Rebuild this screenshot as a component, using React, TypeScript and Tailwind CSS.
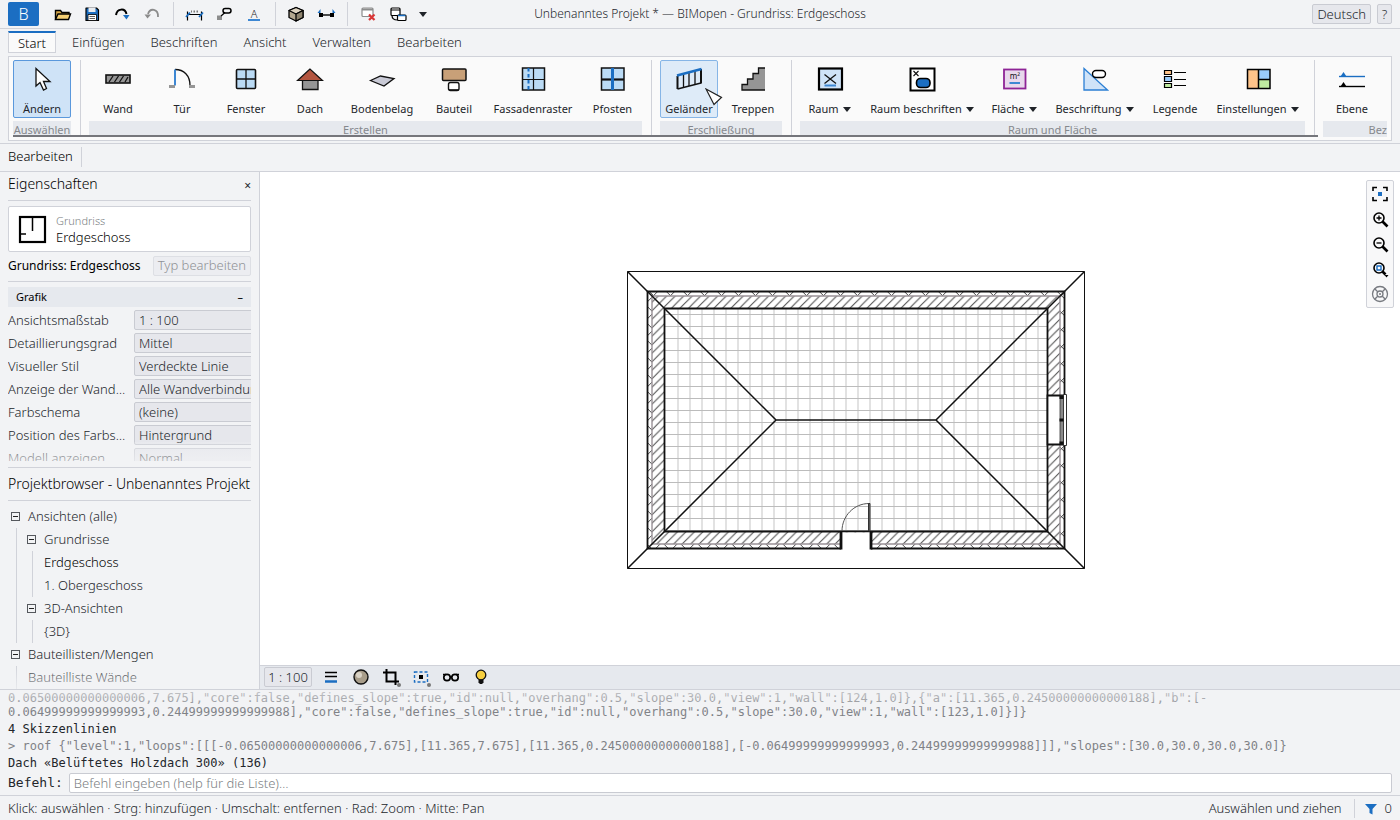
import type { ReactNode } from "react";

const Svg = ({ size, children }: { size: number; children: ReactNode }) => (
  <svg width={size} height={size} viewBox={`0 0 ${size} ${size}`} fill="none" aria-hidden="true" className="shrink-0">
    {children}
  </svg>
);

const Caret = () => (
  <svg width="8" height="5" viewBox="0 0 8 5" aria-hidden="true" className="shrink-0">
    <path d="M0 0h8L4 5z" fill="#1f2328" />
  </svg>
);

/* ---------- quick access bar ---------- */

const quickGroups: { name: string; icon: ReactNode }[][] = [
  [
    {
      name: "Öffnen",
      icon: (
        <>
          <path d="M5.5 17.5V8.5h5l1.5 2h7v2" fill="#d9a94a" stroke="#000" strokeWidth="1.4" />
          <path d="M5.5 17.5l2.5-5.5h12.5l-2 5.5z" fill="#f5cf74" stroke="#000" strokeWidth="1.4" />
        </>
      ),
    },
    {
      name: "Speichern",
      icon: (
        <>
          <path d="M6 6h10.5l2 2v10.5H6z" fill="#1b6ec2" stroke="#000" strokeWidth="1.2" strokeLinejoin="round" />
          <path d="M8.5 5.5h7v4.5h-7z" fill="#e8ebef" />
          <path d="M8 12.5h8.5v6H8z" fill="#fff" stroke="#000" strokeWidth="0.8" />
          <path d="M9.5 14.5h5.5M9.5 16.5h5.5" stroke="#333" strokeWidth="0.8" />
        </>
      ),
    },
    {
      name: "Wiederholen",
      icon: (
        <>
          <path d="M6 13c1-6.5 9-7.5 10.5-1" stroke="#000" strokeWidth="2" />
          <path d="M13 13h6.5l-3 4.5z" fill="#1b6ec2" />
        </>
      ),
    },
    {
      name: "Rückgängig",
      icon: (
        <>
          <path d="M18 15c.5-8.5-8-9.5-10-3" stroke="#8c8c8c" strokeWidth="1.8" />
          <path d="M4.5 12.5h6.5l-3.5 4z" fill="#8c8c8c" />
        </>
      ),
    },
  ],
  [
    {
      name: "Bemaßung",
      icon: (
        <>
          <path d="M5.5 9.5v9M19.5 9.5v9M5 12.5h15" stroke="#000" strokeWidth="1.2" />
          <path d="M4 15l4-4.5M17 15l4-4.5" stroke="#1b6ec2" strokeWidth="1.8" />
          <path d="M9 9.5h1M11.5 9.5h1.5M14.5 9.5h1.5" stroke="#777" strokeWidth="2" />
        </>
      ),
    },
    {
      name: "Kennzeichen",
      icon: (
        <>
          <path d="M5 13.5h5v4.5H5z" fill="#8c8c8c" />
          <path d="M9 14l4-3.5" stroke="#000" strokeWidth="1.2" />
          <rect x="11" y="6.5" width="8" height="4.5" rx="2.2" stroke="#000" strokeWidth="1.5" />
        </>
      ),
    },
    {
      name: "Text",
      icon: (
        <>
          <text x="12" y="16" textAnchor="middle" fontSize="11" fill="#222" fontFamily="Noto Sans, sans-serif">
            A
          </text>
          <path d="M6 18h12" stroke="#3d87d3" strokeWidth="2" />
        </>
      ),
    },
  ],
  [
    {
      name: "3D-Ansicht",
      icon: (
        <g stroke="#000" strokeWidth="1.3" strokeLinejoin="round">
          <path d="M12 5.5l7 3v7l-7 3.5-7-3.5v-7z" fill="#b3a78f" />
          <path d="M12 5.5l7 3-7 3.5-7-3.5z" fill="#ddd3c0" />
          <path d="M12 12v7l7-3.5v-7z" fill="#8e846f" />
        </g>
      ),
    },
    {
      name: "Schnitt",
      icon: (
        <>
          <path d="M5 11h4v4H5zM16 11h4v4h-4z" fill="#000" />
          <path d="M7 13h11" stroke="#000" strokeWidth="1.4" />
          <path d="M3.5 11l3-4v4zM21.5 11l-3-4v4z" fill="#1b6ec2" />
        </>
      ),
    },
  ],
  [
    {
      name: "Fenster schließen",
      icon: (
        <>
          <rect x="6" y="6" width="11" height="8.5" rx="1" fill="#fff" stroke="#8c8c8c" strokeWidth="1.2" />
          <path d="M6 7.5h11" stroke="#8c8c8c" strokeWidth="2" />
          <path d="M13 12.5l5.5 5.5M18.5 12.5L13 18" stroke="#d93636" strokeWidth="2.2" />
        </>
      ),
    },
    {
      name: "Fenster wechseln",
      icon: (
        <>
          <rect x="5" y="6" width="9" height="7.5" rx="1" fill="#fff" stroke="#000" strokeWidth="1.2" />
          <path d="M5 8h9" stroke="#000" />
          <path d="M6 13.5c0 3 2 4.5 5.5 4.5" stroke="#000" strokeWidth="1.2" />
          <rect x="11.5" y="13" width="8.5" height="5.5" rx="1" fill="#fff" stroke="#000" strokeWidth="1.2" />
          <path d="M12 13.5h7.5" stroke="#1b6ec2" strokeWidth="1.5" />
        </>
      ),
    },
  ],
];

/* ---------- ribbon ---------- */

type Tool = { label: string; width: string; icon: ReactNode; menu?: boolean; state?: "active" | "hover" };
type Group = { label: string; tools: Tool[]; cut?: boolean };

const groups: Group[] = [
  {
    label: "Auswählen",
    tools: [
      {
        label: "Ändern",
        width: "w-[58px]",
        state: "active",
        icon: <path d="M8 3.5V21l4-3.5 3.5 7.5 3-1.5-3-7H22z" fill="#fff" stroke="#111" strokeWidth="1.3" />,
      },
    ],
  },
  {
    label: "Erstellen",
    tools: [
      {
        label: "Wand",
        width: "w-[58px]",
        icon: (
          <>
            <rect x="2" y="10" width="24" height="8" fill="#959595" stroke="#111" strokeWidth="1.6" />
            <path d="M5 17l4-6M10.5 17l4-6M15.5 17l4-6M21 17l3-5" stroke="#111" strokeWidth="1.3" />
          </>
        ),
      },
      {
        label: "Tür",
        width: "w-[58px]",
        icon: (
          <>
            <path d="M7 4.5c9 0 15 6 15 16" stroke="#111" strokeWidth="1.3" />
            <path d="M7 4.5v16" stroke="#3d87d3" strokeWidth="2" />
            <path d="M1 20h6v3H1zM21 20h6v3h-6z" fill="#959595" />
          </>
        ),
      },
      {
        label: "Fenster",
        width: "w-[58px]",
        icon: (
          <>
            <rect x="4.5" y="4.5" width="19" height="19" rx="1" fill="#bbdbf5" stroke="#111" strokeWidth="1.6" />
            <path d="M14 4.5v19M4.5 14h19" stroke="#111" strokeWidth="1.3" />
          </>
        ),
      },
      {
        label: "Dach",
        width: "w-[58px]",
        icon: (
          <>
            <path d="M6.5 13h15.5v11.5H6.5z" fill="#959595" stroke="#111" strokeWidth="1.3" />
            <path d="M14 4L1.5 15.5h25z" fill="#b3553f" stroke="#111" strokeWidth="1.2" />
          </>
        ),
      },
      {
        label: "Bodenbelag",
        width: "w-[74px]",
        icon: <path d="M2.5 15.5l10-4.5L26 13.5 16 21z" fill="#c9cad6" stroke="#111" strokeWidth="1.3" />,
      },
      {
        label: "Bauteil",
        width: "w-[58px]",
        icon: (
          <>
            <rect x="2.5" y="4" width="23.5" height="11.5" rx="1" fill="#c8a078" stroke="#111" strokeWidth="1.5" />
            <rect x="8.5" y="17.5" width="10.5" height="8" rx="2" fill="#fff" stroke="#111" strokeWidth="1.4" />
            <path d="M9 25h9.5" stroke="#111" strokeWidth="1.6" />
          </>
        ),
      },
      {
        label: "Fassadenraster",
        width: "w-[88px]",
        icon: (
          <>
            <rect x="3.5" y="3" width="22" height="22" fill="#bbdbf5" stroke="#111" strokeWidth="1.5" />
            <path d="M14.5 3v22M3.5 14.5h22" stroke="#111" strokeWidth="1.2" />
            <path d="M9.5 3v22" stroke="#1b6ec2" strokeWidth="2" strokeDasharray="3.5 2.5" />
          </>
        ),
      },
      {
        label: "Pfosten",
        width: "w-[59px]",
        icon: (
          <>
            <rect x="2.5" y="3" width="22.5" height="22" fill="#bbdbf5" stroke="#111" strokeWidth="1.5" />
            <path d="M2.5 14.5H25" stroke="#111" strokeWidth="2.2" />
            <path d="M13.5 3v22" stroke="#1b6ec2" strokeWidth="3" />
          </>
        ),
      },
    ],
  },
  {
    label: "Erschließung",
    tools: [
      {
        label: "Geländer",
        width: "w-[58px]",
        state: "hover",
        icon: (
          <>
            <path d="M2.5 24l23.5-6" stroke="#111" strokeWidth="1.3" />
            <path d="M2.5 11v13M26 4v14.5" stroke="#111" strokeWidth="2" />
            <path d="M8.5 9v13.5M14 7.5V21M20 6v13.5" stroke="#111" strokeWidth="1.3" />
            <path d="M2 10.5L26.5 4" stroke="#1b6ec2" strokeWidth="2.4" />
          </>
        ),
      },
      {
        label: "Treppen",
        width: "w-[58px]",
        icon: (
          <>
            <path d="M3 25v-5.5h5.5V14H14V8.5h5.5V3H26v22z" fill="#959595" />
            <path d="M26 3h-6.5v5.5H14V14H8.5v5.5H3V25h23" stroke="#111" strokeWidth="1.3" />
          </>
        ),
      },
    ],
  },
  {
    label: "Raum und Fläche",
    tools: [
      {
        label: "Raum",
        width: "w-[59px]",
        menu: true,
        icon: (
          <>
            <rect x="3" y="3.5" width="23" height="21" fill="#cfe3f8" stroke="#000" strokeWidth="2.2" />
            <path d="M8.5 9.5L20 18.5M20 9.5L8.5 18.5" stroke="#111" strokeWidth="1.3" />
            <path d="M8.5 20.5H20" stroke="#3d87d3" strokeWidth="2" />
          </>
        ),
      },
      {
        label: "Raum beschriften",
        width: "w-[114px]",
        menu: true,
        icon: (
          <>
            <rect x="2.5" y="3.5" width="24" height="22" fill="#fff" stroke="#000" strokeWidth="2" />
            <path d="M5.5 6l5 5M10.5 6l-5 5" stroke="#111" strokeWidth="1.1" />
            <rect x="8.5" y="13.5" width="13.5" height="9" rx="4" fill="#1b6ec2" stroke="#000" strokeWidth="1.6" />
          </>
        ),
      },
      {
        label: "Fläche",
        width: "w-[58px]",
        menu: true,
        icon: (
          <>
            <rect x="4" y="4.5" width="21.5" height="19" fill="#e8d8ec" stroke="#8e2496" strokeWidth="1.8" />
            <text x="15" y="14" textAnchor="middle" fontSize="8" fill="#111" fontFamily="Noto Sans, sans-serif">
              m²
            </text>
            <path d="M9.5 18H20" stroke="#3d87d3" strokeWidth="2" />
          </>
        ),
      },
      {
        label: "Beschriftung",
        width: "w-[91px]",
        menu: true,
        icon: (
          <>
            <path d="M3 3.5v21.5h23.5z" fill="#cfe3f8" stroke="#2b7fd4" strokeWidth="1.3" />
            <rect x="11.5" y="5.5" width="13" height="7" rx="3.5" fill="#fff" stroke="#000" strokeWidth="1.4" />
          </>
        ),
      },
      {
        label: "Legende",
        width: "w-[58px]",
        icon: (
          <>
            <g stroke="#000" strokeWidth="1.2">
              <path d="M3.5 5.5h7v4h-7z" fill="#ffc48a" />
              <path d="M3.5 11.5h7v5h-7z" fill="#99cbfb" />
              <path d="M3.5 18.5h7v4h-7z" fill="#bfeaa0" />
            </g>
            <path d="M13 7.5h12M13 14.5h12M13 20.5h12" stroke="#000" />
          </>
        ),
      },
      {
        label: "Einstellungen",
        width: "w-[95px]",
        menu: true,
        icon: (
          <>
            <path d="M3.5 4.5h11v19h-11z" fill="#ffc48a" />
            <path d="M14.5 4.5H26v10H14.5z" fill="#99cbfb" />
            <path d="M14.5 14.5H26v9H14.5z" fill="#bfeaa0" />
            <path d="M3.5 4.5H26v19H3.5zM14.5 4.5v19M14.5 14.5H26" stroke="#000" strokeWidth="1.5" />
          </>
        ),
      },
    ],
  },
  {
    label: "Bez",
    cut: true,
    tools: [
      {
        label: "Ebene",
        width: "w-[58px]",
        icon: (
          <>
            <path d="M1 11.5h26" stroke="#1b6ec2" strokeWidth="1.4" />
            <path d="M2.5 11.5L5.5 7l3 4.5z" fill="#1b6ec2" />
            <path d="M1 21.5h26" stroke="#000" strokeWidth="1.4" />
            <path d="M2.5 21.5l3-4.5 3 4.5z" fill="#000" />
          </>
        ),
      },
    ],
  },
];

const toolState = {
  active: "border-[#5a98dc] bg-[#cfe3f7]",
  hover: "border-[#86b5e6] bg-[#deebf8]",
  none: "border-transparent",
};

function RibbonTool({ tool }: { tool: Tool }) {
  return (
    <button
      type="button"
      className={`relative flex h-[58px] shrink-0 flex-col items-center rounded-xs border pt-1 text-[11px] leading-4 font-normal whitespace-nowrap ${tool.width} ${toolState[tool.state ?? "none"]}`}
    >
      <Svg size={28}>{tool.icon}</Svg>
      <span className="mt-2 flex items-center gap-1">
        {tool.label}
        {tool.menu && <Caret />}
      </span>
      {tool.state === "hover" && (
        <svg width="18" height="18" viewBox="0 0 18 18" aria-hidden="true" className="absolute top-[27px] left-11">
          <path d="M1 1l15.5 8.5-7.5 7z" fill="#fff" stroke="#222" strokeWidth="1.2" />
        </svg>
      )}
    </button>
  );
}

function Ribbon() {
  return (
    <section className="mx-2 mt-[3px] h-[85px] shrink-0 border border-[#d0d2d9] bg-[#fafafa] px-1 pt-[3px]">
      <div className="relative flex h-[77px] overflow-hidden">
        {groups.map((group) => (
          <div
            key={group.label}
            className={`flex shrink-0 ${group.cut ? "grow" : "mr-2 border-r border-[#d0d2d9] pr-[9px]"}`}
          >
            <div className="flex grow flex-col gap-[3px]">
              <div className="flex gap-[6px]">
                {group.tools.map((tool) => (
                  <RibbonTool key={tool.label} tool={tool} />
                ))}
              </div>
              <div
                className={`h-4 bg-[#e6e9ee] text-[11px] leading-[18px] font-normal text-[#85888d] ${group.cut ? "text-right" : "text-center"}`}
              >
                {group.label}
              </div>
            </div>
          </div>
        ))}
        <div className="absolute bottom-0 left-0 h-[2px] w-[95%] bg-[#75767b]" />
      </div>
    </section>
  );
}

/* ---------- properties ---------- */

const properties = [
  ["Ansichtsmaßstab", "1 : 100"],
  ["Detaillierungsgrad", "Mittel"],
  ["Visueller Stil", "Verdeckte Linie"],
  ["Anzeige der Wand…", "Alle Wandverbindungen"],
  ["Farbschema", "(keine)"],
  ["Position des Farbs…", "Hintergrund"],
  ["Modell anzeigen", "Normal"],
];

function Properties() {
  return (
    <section className="px-2">
      <header className="flex h-[29px] items-center justify-between border-b border-[#d0d2d9] pb-1">
        <h2 className="text-sm text-black">Eigenschaften</h2>
        <button type="button" aria-label="Schließen" className="pt-1 text-xs leading-4 font-normal">
          ×
        </button>
      </header>
      <div className="mt-[5px] flex h-[46px] items-center gap-2 rounded-xs border border-[#d0d2d9] bg-white px-2">
        <Svg size={31}>
          <rect x="3" y="3" width="25" height="25" stroke="#000" strokeWidth="2.2" />
          <path d="M15.5 3v14M3 20h6" stroke="#000" strokeWidth="1.5" />
        </Svg>
        <div className="leading-4">
          <p className="text-[11px] text-[#7c7f84]">Grundriss</p>
          <p className="text-black">Erdgeschoss</p>
        </div>
      </div>
      <div className="mt-1 flex h-5 items-center justify-between">
        <span className="text-xs font-normal text-black">Grundriss: Erdgeschoss</span>
        <button
          type="button"
          disabled
          className="flex h-5 items-center rounded-xs border border-[#dddfe4] bg-[#ecedf1] px-1 text-[#8f9196]"
        >
          Typ bearbeiten
        </button>
      </div>
      <div className="mt-[5px] h-[180px] overflow-hidden border-t border-[#d0d2d9] pt-[5px]">
        <button
          type="button"
          className="flex h-5 w-full items-center justify-between bg-[#e6e9ee] px-2 text-[11px] font-normal text-black"
        >
          <span>Grafik</span>
          <span>–</span>
        </button>
        <div className="relative mt-[3px] grid gap-[3px]">
          {properties.map(([label, value], i) => (
            <div key={label} className="flex h-5 items-center gap-2">
              <label htmlFor={`property-${i}`} className="w-[118px] shrink-0 pt-px whitespace-nowrap">
                {label}
              </label>
              <select
                id={`property-${i}`}
                className="h-5 w-[170px] shrink-0 appearance-none rounded-xs border border-[#c9cbd2] bg-[#e6e7ec] px-1"
              >
                <option>{value}</option>
              </select>
            </div>
          ))}
          <div className="pointer-events-none absolute inset-x-0 bottom-0 h-[26px] bg-gradient-to-b from-[#f2f3f5]/20 to-[#f2f3f5]/80" />
        </div>
      </div>
    </section>
  );
}

/* ---------- project browser ---------- */

type Node = { label: string; children?: Node[]; current?: boolean };

const tree: Node[] = [
  {
    label: "Ansichten (alle)",
    children: [
      { label: "Grundrisse", children: [{ label: "Erdgeschoss", current: true }, { label: "1. Obergeschoss" }] },
      { label: "3D-Ansichten", children: [{ label: "{3D}" }] },
    ],
  },
  { label: "Bauteillisten/Mengen", children: [{ label: "Bauteilliste Wände" }] },
];

function Branch({ nodes, nested }: { nodes: Node[]; nested?: boolean }) {
  return (
    <ul className={nested ? "ml-2 border-l border-[#d0d2d9] pl-[7px]" : ""}>
      {nodes.map((node) => (
        <li key={node.label}>
          <button
            type="button"
            className={`flex h-[23px] items-center gap-2 whitespace-nowrap ${node.children ? "pl-[3px]" : "pl-1"} ${node.current ? "text-black" : ""}`}
          >
            {node.children && (
              <Svg size={9}>
                <rect x="0.5" y="0.5" width="8" height="8" stroke="#55585d" />
                <path d="M2 4.5h5" stroke="#222" />
              </Svg>
            )}
            {node.label}
          </button>
          {node.children && <Branch nodes={node.children} nested />}
        </li>
      ))}
    </ul>
  );
}

function Browser() {
  return (
    <section className="relative mt-[6px] h-[222px] overflow-hidden px-2">
      <h2 className="flex h-[34px] items-center border-y border-[#d0d2d9] text-sm whitespace-nowrap text-black">
        Projektbrowser - Unbenanntes Projekt
      </h2>
      <div className="mt-1">
        <Branch nodes={tree} />
      </div>
      <div className="pointer-events-none absolute inset-x-0 bottom-0 h-6 bg-gradient-to-b from-[#f2f3f5]/0 to-[#f2f3f5]/70" />
    </section>
  );
}

/* ---------- drawing ---------- */

const columns = Array.from({ length: 31 }, (_, i) => 678 + i * 12);
const rows = Array.from({ length: 19 }, (_, i) => 314.5 + i * 12);

function FloorPlan() {
  return (
    <svg viewBox="260 172 1140 493" className="absolute inset-0 size-full" role="img" aria-label="Grundriss Erdgeschoss">
      <defs>
        <pattern id="core" width="8.5" height="8.5" x="2.2" patternUnits="userSpaceOnUse">
          <path d="M-1 9.5L9.5-1M-1 1l2-2M7.5 9.5l2-2" stroke="#444" />
        </pattern>
        <pattern id="facing" width="17" height="17" patternUnits="userSpaceOnUse">
          <path d="M-1-1.8l19 19M-1 15.2l3 3M15.2-1L-1 15.2M18 13.2l-5 5" stroke="#444" />
        </pattern>
      </defs>
      <g fill="none">
        {columns.map((x) => (
          <path key={x} d={`M${x} 309V531`} stroke="#e2e2e2" strokeWidth="2" />
        ))}
        {rows.map((y) => (
          <path key={y} d={`M665 ${y}H1047`} stroke="#bcbcbc" />
        ))}
        <path d="M652 296h408v248h-408zM664.5 308.5v223h383v-223z" fill="url(#core)" fillRule="evenodd" />
        <path d="M647.5 291.5h417v257h-417zM652 296v248h408v-248z" fill="url(#facing)" fillRule="evenodd" />
        <path d="M652 296h408v248h-408z" stroke="#9a9298" strokeWidth="1.4" />
        <path d="M647.5 291.5h417v257h-417z" stroke="#111" strokeWidth="1.8" />
        <path d="M664.5 308.5h383v223h-383z" stroke="#111" strokeWidth="1.8" />
        <path d="M627.5 271.5h457v297h-457z" stroke="#111" />
        <path
          d="M627.5 271.5L776 420 627.5 568.5M1084.5 271.5L936 420l148.5 148.5M776 420h160"
          stroke="#111"
          strokeWidth="1.5"
        />
        {/* door */}
        <path d="M841 532.5h30V550h-30z" fill="#fff" />
        <path d="M841 531v18.5M871 531v18.5" stroke="#111" strokeWidth="2.8" />
        <path d="M842 531c0-15 12-27.5 27-27.5" stroke="#555" />
        <path d="M868.5 503.500h1.5V531h-1.5z" fill="#777" stroke="#333" />
        {/* window */}
        <path d="M1047.5 395.5h17v49h-17z" fill="#fff" stroke="#111" strokeWidth="1.8" />
        <path d="M1063.5 394.5h3v51h-3z" fill="#fff" stroke="#333" />
        <path d="M1060 396h3.5v48h-3.5z" fill="#8a8a8a" stroke="#333" strokeWidth="0.8" />
        <path d="M1059.5 396h4v3h-4zM1059.5 418.5h4v3h-4zM1059.5 441.5h4v3h-4z" fill="#111" />
      </g>
    </svg>
  );
}

const lens = (
  <>
    <circle cx="8" cy="8" r="5" stroke="#000" strokeWidth="1.6" />
    <path d="M11.5 11.5l5 5" stroke="#000" strokeWidth="2.6" />
  </>
);

const navTools = [
  {
    name: "Alles zeigen",
    icon: (
      <>
        <path d="M2 6V2.5h4M12 2.5h4V6M16 12v3.5h-4M6 15.5H2V12" stroke="#000" strokeWidth="1.6" />
        <path d="M7 7h4v4H7z" fill="#1b6ec2" />
      </>
    ),
  },
  {
    name: "Vergrößern",
    icon: (
      <>
        {lens}
        <path d="M5.5 8h5M8 5.5v5" stroke="#000" strokeWidth="1.3" />
      </>
    ),
  },
  {
    name: "Verkleinern",
    icon: (
      <>
        {lens}
        <path d="M5.5 8h5" stroke="#000" strokeWidth="1.3" />
      </>
    ),
  },
  {
    name: "Bereich zoomen",
    icon: (
      <>
        <circle cx="8" cy="8" r="5" stroke="#000" strokeWidth="1.6" />
        <path d="M11.5 11.5l3 3" stroke="#000" strokeWidth="2.6" />
        <path d="M13.5 15h4l-2 2.500z" fill="#000" />
        <path d="M6 6h4v4H6z" fill="#fff" stroke="#1b6ec2" strokeWidth="1.4" />
      </>
    ),
  },
  {
    name: "Navigationsrad",
    icon: (
      <>
        <circle cx="9" cy="9" r="7.5" stroke="#777a80" strokeWidth="1.3" />
        <circle cx="9" cy="9" r="3" stroke="#777a80" strokeWidth="1.3" />
        <circle cx="9" cy="9" r="1" fill="#777a80" />
        <path d="M3.7 3.7l3 3M14.3 3.7l-3 3M3.7 14.3l3-3M14.3 14.3l-3-3" stroke="#777a80" strokeWidth="1.3" />
      </>
    ),
  },
];

const viewTools = [
  {
    name: "Linienstärke",
    icon: (
      <>
        <path d="M4 5.5h12M4 9.5h12" stroke="#000" strokeWidth="1.5" />
        <path d="M4 14.5h12" stroke="#1b6ec2" strokeWidth="2.5" />
      </>
    ),
  },
  {
    name: "Visueller Stil",
    icon: (
      <>
        <circle cx="10" cy="10" r="7" fill="#a89d8a" stroke="#111" strokeWidth="1.4" />
        <circle cx="8" cy="8" r="3" fill="#d9d2c5" />
      </>
    ),
  },
  {
    name: "Zuschneiden",
    icon: (
      <>
        <path d="M5.5 2v12.5H18M2 5.5h12.5V18" stroke="#000" strokeWidth="2" />
        <circle cx="18" cy="18" r="2" fill="#777" />
      </>
    ),
  },
  {
    name: "Zuschneidebereich",
    icon: (
      <>
        <rect x="3.5" y="5" width="13" height="10" stroke="#1b6ec2" strokeWidth="1.4" strokeDasharray="3 2" />
        <path d="M8 8h4v4H8z" fill="#000" />
        <circle cx="18" cy="18" r="2" fill="#777" />
      </>
    ),
  },
  {
    name: "Temporär ausblenden",
    icon: (
      <>
        <circle cx="6" cy="10.5" r="3.2" stroke="#000" strokeWidth="1.7" />
        <circle cx="14" cy="10.5" r="3.2" stroke="#000" strokeWidth="1.7" />
        <path d="M2 7.5h3M15 7.5h3M9 10h2" stroke="#000" strokeWidth="1.5" />
      </>
    ),
  },
  {
    name: "Verdeckte Elemente",
    icon: (
      <>
        <circle cx="10" cy="8" r="4.8" fill="#f7cf3f" stroke="#111" strokeWidth="1.3" />
        <path d="M7.5 12.5h5v3L11 17H9l-1.5-1.5z" fill="#111" />
      </>
    ),
  },
];

/* ---------- command log ---------- */

const loopEcho = [
  '0.06500000000000006,7.675],"core":false,"defines_slope":true,"id":null,"overhang":0.5,"slope":30.0,"view":1,"wall":[124,1.0]},{"a":[11.365,0.24500000000000188],"b":[-',
  '0.06499999999999993,0.24499999999999988],"core":false,"defines_slope":true,"id":null,"overhang":0.5,"slope":30.0,"view":1,"wall":[123,1.0]}]}',
];

const roofEcho =
  '> roof {"level":1,"loops":[[[-0.06500000000000006,7.675],[11.365,7.675],[11.365,0.24500000000000188],[-0.06499999999999993,0.24499999999999988]]],"slopes":[30.0,30.0,30.0,30.0]}';

function CommandLog() {
  return (
    <section className="h-[106px] shrink-0 border-t border-[#d0d2d9] px-2 pt-px font-['DejaVu_Sans_Mono',monospace] text-xs leading-[14px] font-normal">
      <div className="relative grid gap-[3px] whitespace-nowrap">
        <p className="text-[#808287]">
          {loopEcho[0]}
          <br />
          {loopEcho[1]}
        </p>
        <p>4 Skizzenlinien</p>
        <p className="text-[#808287]">{roofEcho}</p>
        <p>Dach «Belüftetes Holzdach 300» (136)</p>
        <div className="pointer-events-none absolute inset-x-0 top-0 h-5 bg-gradient-to-b from-[#f2f3f5]/60 to-[#f2f3f5]/0" />
      </div>
      <div className="mt-[3px] flex items-center gap-[6px] text-[13px]">
        <label htmlFor="command">Befehl:</label>
        <input
          id="command"
          placeholder="Befehl eingeben (help für die Liste)…"
          className="h-5 grow rounded-xs border border-[#c9cbd2] bg-white px-1 font-['Noto_Sans',sans-serif] font-light placeholder:text-[#7c7f84]"
        />
      </div>
    </section>
  );
}

const tabs = ["Einfügen", "Beschriften", "Ansicht", "Verwalten", "Bearbeiten"];

export default function App() {
  return (
    <div className="flex h-screen flex-col overflow-hidden bg-[#f2f3f5] font-['Noto_Sans',sans-serif] text-[13px] font-light text-[#23262b]">
      <header className="grid h-[29px] shrink-0 grid-cols-[1fr_auto_1fr] items-center border-b border-[#d0d2d9] px-2">
        <div className="flex items-center">
          <button type="button" className="mr-[11px] h-6 w-[31px] rounded-xs bg-[#1b6ec2] text-base leading-6 text-white">
            B
          </button>
          {quickGroups.map((group, i) => (
            <div
              key={group[0].name}
              className={`flex gap-[6px] ${i > 0 ? "ml-[9px] border-l border-[#d0d2d9] pl-2" : ""}`}
            >
              {group.map((tool) => (
                <button key={tool.name} type="button" aria-label={tool.name}>
                  <Svg size={24}>{tool.icon}</Svg>
                </button>
              ))}
            </div>
          ))}
          <button type="button" aria-label="Schnellzugriff anpassen" className="ml-[9px]">
            <Caret />
          </button>
        </div>
        <h1 className="text-xs">Unbenanntes Projekt * — BIMopen - Grundriss: Erdgeschoss</h1>
        <div className="flex justify-end gap-[6px]">
          <button type="button" className="h-5 rounded-xs border border-[#c9cbd2] bg-[#e6e7ec] px-1 leading-4">
            Deutsch
          </button>
          <button type="button" className="h-5 w-[15px] rounded-xs border border-[#c9cbd2] bg-[#e6e7ec] leading-4">
            ?
          </button>
        </div>
      </header>

      <nav className="mt-[2px] flex h-[22px] shrink-0 items-stretch px-2">
        <button
          type="button"
          className="mr-4 w-12 border border-t-2 border-[#d0d2d9] border-t-[#1b6ec2] bg-[#fafafa] leading-4 text-black"
        >
          Start
        </button>
        <div className="flex gap-[26px] pt-px">
          {tabs.map((tab) => (
            <button key={tab} type="button">
              {tab}
            </button>
          ))}
        </div>
      </nav>

      <Ribbon />

      <div className="mt-[2px] flex h-[29px] shrink-0 items-center border-y border-[#d0d2d9] px-2 pb-px text-black">
        <span className="border-r border-[#d0d2d9] pr-2">Bearbeiten</span>
      </div>

      <div className="flex min-h-0 grow">
        <aside className="w-[260px] shrink-0 overflow-hidden border-r border-[#d0d2d9]">
          <Properties />
          <Browser />
        </aside>
        <main className="flex min-w-0 grow flex-col">
          <div className="relative min-h-0 grow bg-white">
            <FloorPlan />
            <div className="absolute top-2 right-[6px] flex w-7 flex-col items-center gap-[7px] rounded-xs border border-[#d0d2d9] bg-[#f8f8f9] py-1">
              {navTools.map((tool) => (
                <button key={tool.name} type="button" aria-label={tool.name}>
                  <Svg size={18}>{tool.icon}</Svg>
                </button>
              ))}
            </div>
          </div>
          <div className="flex h-6 shrink-0 items-center gap-[10px] border-t border-[#d0d2d9] bg-[#e6e9ee] px-1 pb-px">
            <button type="button" className="mr-[-1px] h-5 w-12 rounded-xs border border-[#c9cbd2] bg-[#e6e7ec] leading-4">
              1 : 100
            </button>
            {viewTools.map((tool) => (
              <button key={tool.name} type="button" aria-label={tool.name}>
                <Svg size={20}>{tool.icon}</Svg>
              </button>
            ))}
          </div>
        </main>
      </div>

      <CommandLog />

      <footer className="flex h-[25px] shrink-0 items-center border-t border-[#d0d2d9] px-2 pt-px">
        <p className="grow">Klick: auswählen · Strg: hinzufügen · Umschalt: entfernen · Rad: Zoom · Mitte: Pan</p>
        <p className="border-r border-[#d0d2d9] pr-3">Auswählen und ziehen</p>
        <button type="button" className="flex items-center gap-2 pl-[10px]" aria-label="Auswahlfilter">
          <Svg size={12}>
            <path d="M0 1h12L7.5 6v5.5l-3-1.5V6z" fill="#1b6ec2" />
          </Svg>
          0
        </button>
      </footer>
    </div>
  );
}
